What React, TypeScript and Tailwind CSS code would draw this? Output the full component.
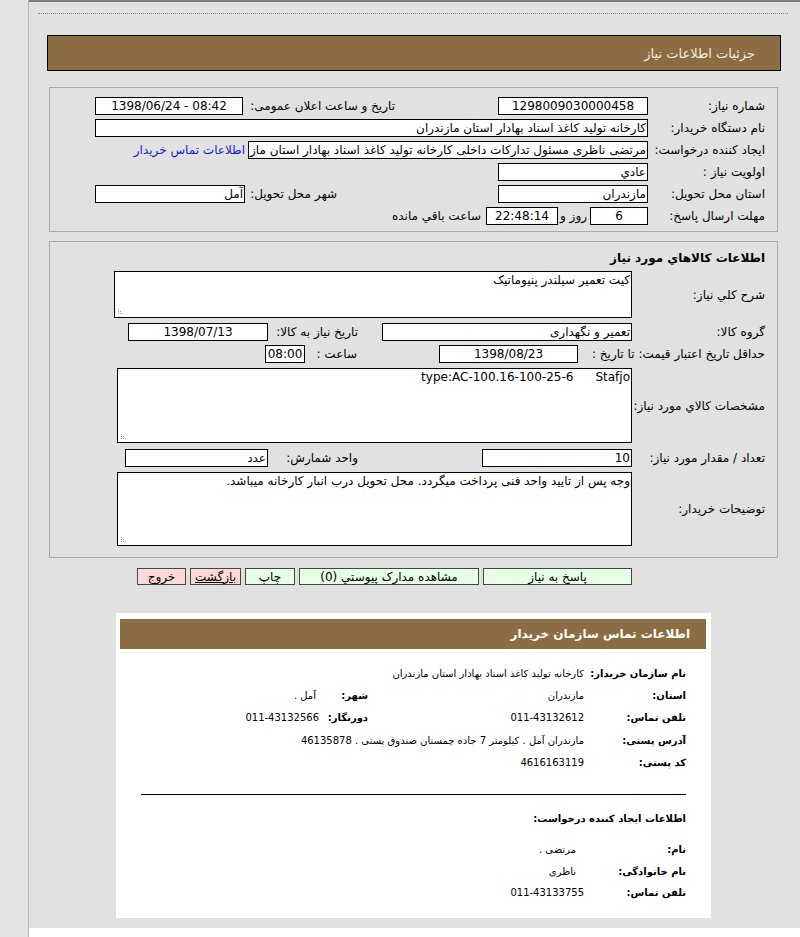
import React from "react";

const Grip = () => (
  <svg className="absolute bottom-[2px] left-[2px]" width="8" height="8" viewBox="0 0 8 8">
    <rect x="1" y="6" width="1" height="1" fill="#a0a0a0" />
    <rect x="3" y="6" width="1" height="1" fill="#a0a0a0" />
    <rect x="5" y="6" width="1" height="1" fill="#a0a0a0" />
    <rect x="1" y="4" width="1" height="1" fill="#a0a0a0" />
    <rect x="3" y="4" width="1" height="1" fill="#a0a0a0" />
    <rect x="1" y="2" width="1" height="1" fill="#a0a0a0" />
  </svg>
);

export default function App() {
  return (
    <div className="flex h-[937px] w-[800px] overflow-hidden bg-[#e1e1e1] font-[Tahoma,'DejaVu_Sans',sans-serif] text-[12px] leading-none text-black">
      <div className="w-[29px] shrink-0 border-r border-[#b7b7b7] bg-[#e3e3e3]" />
      <div className="flex flex-1 flex-col bg-white">
        <main dir="rtl" className="h-[928px] shrink-0 border-t-[2px] border-[#7d7d7d] bg-[#e1e1e1]">
          <div className="ml-[9px] mr-[12px] mt-[11px] h-0 border-t border-dotted border-[#8a8a8a]" />

          <div className="ml-[18px] mr-[19px] mt-[21px] flex h-[36px] items-center border border-black bg-[#8c6d43] pr-[25px] text-[13px] text-[#f4ecdc]">
            جزئیات اطلاعات نیاز
          </div>

          {/* Fieldset 1 */}
          <div className="ml-[20px] mr-[22px] mt-[16px] h-[145px] border border-[#a9a9a9] pr-[12px] pt-[7px]">
            <div className="flex h-[22px] items-center">
              <span className="w-[117px] shrink-0 whitespace-nowrap">شماره نیاز:</span>
              <div className="flex h-[18px] w-[150px] shrink-0 items-center justify-center border border-black bg-white">1298009030000458</div>
              <span className="w-[255px] shrink-0 whitespace-nowrap pr-[103px]">تاریخ و ساعت اعلان عمومی:</span>
              <div dir="ltr" className="flex h-[18px] w-[148px] shrink-0 items-center justify-center border border-black bg-white">1398/06/24 - 08:42</div>
            </div>
            <div className="flex h-[22px] items-center">
              <span className="w-[117px] shrink-0 whitespace-nowrap">نام دستگاه خریدار:</span>
              <div className="flex h-[18px] w-[553px] shrink-0 items-center border border-black bg-white pr-[1px]">کارخانه تولید کاغذ اسناد بهادار استان مازندران</div>
            </div>
            <div className="flex h-[22px] items-center">
              <span className="w-[117px] shrink-0 whitespace-nowrap">ایجاد کننده درخواست:</span>
              <div className="h-[18px] w-[400px] shrink-0 overflow-hidden whitespace-nowrap border border-black bg-white pr-[1px] leading-[16px]">مرتضی ناظری مسئول تدارکات داخلی کارخانه تولید کاغذ اسناد بهادار استان ماز</div>
              <span className="mr-[3px] whitespace-nowrap text-[#1a1ad0]">اطلاعات تماس خریدار</span>
            </div>
            <div className="flex h-[22px] items-center">
              <span className="w-[117px] shrink-0 whitespace-nowrap">اولویت نیاز :</span>
              <div className="flex h-[18px] w-[150px] shrink-0 items-center border border-black bg-white pr-[1px]">عادي</div>
            </div>
            <div className="flex h-[22px] items-center">
              <span className="w-[117px] shrink-0 whitespace-nowrap">استان محل تحویل:</span>
              <div className="flex h-[18px] w-[150px] shrink-0 items-center border border-black bg-white pr-[1px]">مازندران</div>
              <span className="w-[253px] shrink-0 whitespace-nowrap pr-[161px]">شهر محل تحویل:</span>
              <div className="flex h-[18px] w-[150px] shrink-0 items-center border border-black bg-white pr-[1px]">آمل</div>
            </div>
            <div className="flex h-[22px] items-center">
              <span className="w-[117px] shrink-0 whitespace-nowrap">مهلت ارسال پاسخ:</span>
              <div className="flex h-[18px] w-[58px] shrink-0 items-center justify-center border border-black bg-white">6</div>
              <span className="shrink-0 whitespace-nowrap pl-[2px] pr-[3px]">روز و</span>
              <div className="flex h-[18px] w-[72px] shrink-0 items-center justify-center border border-black bg-white">22:48:14</div>
              <span className="whitespace-nowrap pr-[5px]">ساعت باقي مانده</span>
            </div>
          </div>

          {/* Fieldset 2 */}
          <div className="ml-[20px] mr-[22px] mt-[9px] flex h-[317px] flex-col border border-[#a9a9a9] pr-[12px]">
            <div className="mt-[7px] h-[18px] font-bold leading-[18px]">اطلاعات کالاهاي مورد نياز</div>
            <div className="mt-[4px] flex items-center">
              <span className="w-[133px] shrink-0 whitespace-nowrap">شرح کلي نياز:</span>
              <div className="relative h-[47px] w-[518px] shrink-0 border border-black bg-white pr-[1px] pt-[2px]">
                کیت تعمیر سیلندر پنیوماتیک
                <Grip />
              </div>
            </div>
            <div className="mt-[5px] flex h-[18px] items-center">
              <span className="w-[133px] shrink-0 whitespace-nowrap">گروه کالا:</span>
              <div className="flex h-[18px] w-[250px] shrink-0 items-center border border-black bg-white pr-[1px]">تعمیر و نگهداری</div>
              <span className="w-[114px] shrink-0 whitespace-nowrap pr-[24px]">تاریخ نیاز به کالا:</span>
              <div className="flex h-[18px] w-[140px] shrink-0 items-center justify-center border border-black bg-white">1398/07/13</div>
            </div>
            <div className="mt-[4px] flex h-[18px] items-center">
              <div className="flex w-[187px] shrink-0 whitespace-nowrap">
                <span>حداقل تاریخ اعتبار قیمت:</span>
                <span className="mr-[4px]">تا تاریخ :</span>
              </div>
              <div className="flex h-[18px] w-[139px] shrink-0 items-center justify-center border border-black bg-white">1398/08/23</div>
              <span className="w-[134px] shrink-0 whitespace-nowrap pr-[82px]">ساعت :</span>
              <div className="flex h-[18px] w-[40px] shrink-0 items-center justify-center border border-black bg-white">08:00</div>
            </div>
            <div className="mt-[5px] flex items-center">
              <span className="w-[133px] shrink-0 whitespace-nowrap">مشخصات کالاي مورد نياز:</span>
              <div className="relative h-[75px] w-[515px] shrink-0 border border-black bg-white pr-[1px] pt-[2px]">
                <span className="inline-block">Stafjo</span>
                <span className="mr-[22px] inline-block">type:AC-100.16-100-25-6</span>
                <Grip />
              </div>
            </div>
            <div className="mt-[6px] flex h-[18px] items-center">
              <span className="w-[133px] shrink-0 whitespace-nowrap">تعداد / مقدار مورد نياز:</span>
              <div className="flex h-[18px] w-[150px] shrink-0 items-center border border-black bg-white pr-[1px]">10</div>
              <span className="w-[214px] shrink-0 whitespace-nowrap pr-[124px]">واحد شمارش:</span>
              <div className="flex h-[18px] w-[143px] shrink-0 items-center border border-black bg-white pr-[1px]">عدد</div>
            </div>
            <div className="mt-[5px] flex items-center">
              <span className="w-[133px] shrink-0 whitespace-nowrap">توضیحات خریدار:</span>
              <div className="relative h-[74px] w-[515px] shrink-0 border border-black bg-white pr-[1px] pt-[2px]">
                وجه پس از تایید واحد فنی پرداخت میگردد. محل تحویل درب انبار کارخانه میباشد.
                <Grip />
              </div>
            </div>
          </div>

          {/* Buttons */}
          <div className="mr-[168px] mt-[10px] flex h-[17px] gap-[4px]">
            <div className="flex w-[149px] items-center justify-center border border-[#444] bg-[#e6ffe6]">پاسخ به نیاز</div>
            <div className="flex w-[180px] items-center justify-center border border-[#444] bg-[#e6ffe6]">مشاهده مدارک پیوستي (0)</div>
            <div className="flex w-[50px] items-center justify-center border border-[#444] bg-[#e6ffe6]">چاپ</div>
            <div className="flex w-[51px] items-center justify-center whitespace-nowrap border border-[#444] bg-[#ffd8d8] underline">بازگشت</div>
            <div className="flex w-[49px] items-center justify-center border border-[#444] bg-[#ffd8d8]">خروج</div>
          </div>

          {/* Contact card */}
          <div className="ml-[87px] mr-[89px] mt-[28px] h-[305px] bg-white pt-[6px]">
            <div className="ml-[4px] mr-[5px] flex h-[30px] items-center bg-[#8c6d43] pr-[16px] text-[12px] font-bold text-white">
              اطلاعات تماس سازمان خریدار
            </div>
            <div className="mt-[14px] pr-[25px]">
              <div className="flex h-[22px] items-center">
                <span className="w-[102px] shrink-0 whitespace-nowrap text-[10px] font-bold">نام سازمان خریدار:</span>
                <span className="whitespace-nowrap text-[10px]">کارخانه تولید کاغذ اسناد بهادار استان مازندران</span>
              </div>
              <div className="flex h-[22px] items-center">
                <span className="w-[102px] shrink-0 whitespace-nowrap text-[10px] font-bold">استان:</span>
                <span className="w-[216px] shrink-0 text-[10px]">مازندران</span>
                <span className="w-[52px] shrink-0 text-[10px] font-bold">شهر:</span>
                <span className="text-[10px]">آمل .</span>
              </div>
              <div className="flex h-[22px] items-center">
                <span className="w-[102px] shrink-0 whitespace-nowrap text-[10px] font-bold">تلفن تماس:</span>
                <span className="w-[216px] shrink-0 text-[10px]">011-43132612</span>
                <span className="w-[49px] shrink-0 text-[10px] font-bold">دورنگار:</span>
                <span className="text-[10px]">011-43132566</span>
              </div>
              <div className="flex h-[23px] items-center">
                <span className="w-[102px] shrink-0 whitespace-nowrap text-[10px] font-bold">آدرس پستی:</span>
                <span className="whitespace-nowrap text-[10px]">مازندران آمل . کیلومتر 7 جاده چمستان صندوق پستی . 46135878</span>
              </div>
              <div className="flex h-[22px] items-center">
                <span className="w-[102px] shrink-0 whitespace-nowrap text-[10px] font-bold">کد پستی:</span>
                <span className="text-[10px]">4616163119</span>
              </div>
            </div>
            <div className="ml-[25px] mr-[25px] mt-[20px] h-0 border-t border-black" />
            <div className="mt-[19px] pr-[25px] text-[10px] font-bold">اطلاعات ایجاد کننده درخواست:</div>
            <div className="mt-[15px] pr-[25px]">
              <div className="flex h-[22px] items-center">
                <span className="w-[110px] shrink-0 whitespace-nowrap text-[10px] font-bold">نام:</span>
                <span className="text-[10px]">مرتضی .</span>
              </div>
              <div className="flex h-[21px] items-center">
                <span className="w-[110px] shrink-0 whitespace-nowrap text-[10px] font-bold">نام خانوادگی:</span>
                <span className="text-[10px]">ناظری</span>
              </div>
              <div className="flex h-[22px] items-center">
                <span className="w-[102px] shrink-0 whitespace-nowrap text-[10px] font-bold">تلفن تماس:</span>
                <span className="text-[10px]">011-43133755</span>
              </div>
            </div>
          </div>
        </main>
      </div>
    </div>
  );
}
